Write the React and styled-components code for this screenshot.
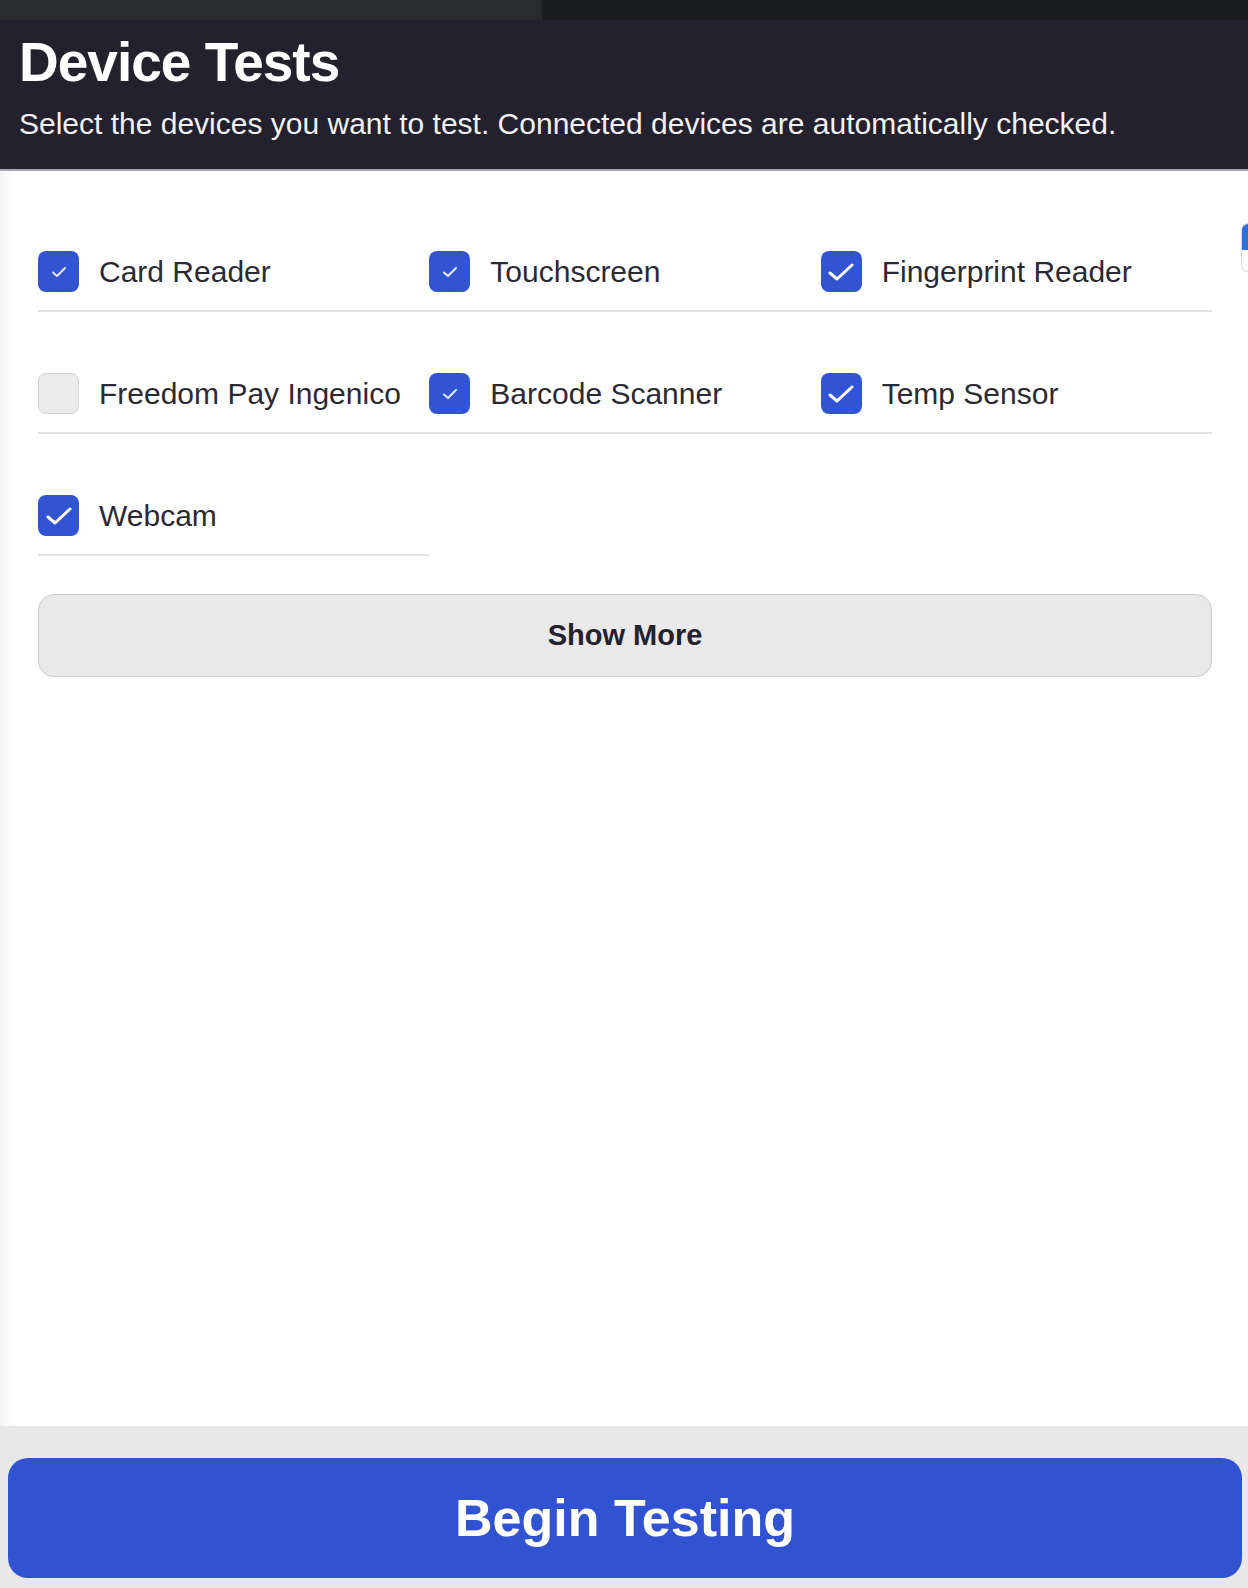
import React, { useState } from 'react';
import styled, { createGlobalStyle } from 'styled-components';

const GlobalStyle = createGlobalStyle`
  html, body {
    margin: 0;
    padding: 0;
    background: #ffffff;
  }
  * {
    box-sizing: border-box;
  }
`;

const devices = [
  { name: 'Card Reader', checked: true, big: false },
  { name: 'Touchscreen', checked: true, big: false },
  { name: 'Fingerprint Reader', checked: true, big: true },
  { name: 'Freedom Pay Ingenico', checked: false, big: false },
  { name: 'Barcode Scanner', checked: true, big: false },
  { name: 'Temp Sensor', checked: true, big: true },
  { name: 'Webcam', checked: true, big: true },
];

const Page = styled.div`
  position: relative;
  display: flex;
  flex-direction: column;
  min-height: 100vh;
  font-family: 'Liberation Sans', Arial, sans-serif;
  overflow: hidden;
`;

const TabStrip = styled.div`
  display: flex;
  height: 20px;
  background: #1b1c20;
`;

const ActiveTab = styled.div`
  width: 542px;
  background: #2a2b2f;
`;

const Header = styled.header`
  background: #22212d;
  padding: 12px 19px 27px;
  border-bottom: 2px solid #a7a7ab;
`;

const Title = styled.h1`
  margin: 0 0 14px;
  font-size: 55px;
  line-height: 60px;
  font-weight: 700;
  letter-spacing: -1px;
  color: #ffffff;
`;

const Subtitle = styled.p`
  margin: 0;
  font-size: 30px;
  line-height: 36px;
  color: #f1f1f3;
`;

const Content = styled.main`
  flex: 1;
  padding: 60px 36px 40px 38px;
  background: linear-gradient(to right, #f3f3f3 0, #fbfbfb 8px, #ffffff 16px);
`;

const Grid = styled.div`
  display: grid;
  grid-template-columns: repeat(3, 1fr);
  row-gap: 41px;
`;

const Item = styled.label`
  display: flex;
  align-items: center;
  gap: 20px;
  padding: 20px 0 18px;
  border-bottom: 2px solid #e1e1e3;
  cursor: pointer;
`;

const Box = styled.span`
  flex: none;
  display: flex;
  align-items: center;
  justify-content: center;
  width: 41px;
  height: 41px;
  border-radius: 8px;
  background: ${p => (p.$checked ? '#3254d1' : '#ebebeb')};
  border: ${p => (p.$checked ? 'none' : '1.5px solid #d3d3d5')};
`;

const Label = styled.span`
  font-size: 30px;
  line-height: 36px;
  color: #2b2a33;
  white-space: nowrap;
`;

const ShowMore = styled.button`
  display: block;
  width: 100%;
  height: 83px;
  margin-top: 38px;
  border: 1.5px solid #cdcdcf;
  border-radius: 16px;
  background: #e9e9ea;
  font-family: 'Liberation Sans', Arial, sans-serif;
  font-size: 29px;
  font-weight: 700;
  color: #23222e;
  cursor: pointer;
`;

const Footer = styled.footer`
  background: #e8e8e9;
  padding: 32px 6px 10px 8px;
`;

const BeginButton = styled.button`
  display: block;
  width: 100%;
  height: 120px;
  border: none;
  border-radius: 20px;
  background: #3253d1;
  font-family: 'Liberation Sans', Arial, sans-serif;
  font-size: 52px;
  font-weight: 700;
  color: #ffffff;
  cursor: pointer;
`;

const SideWidget = styled.div`
  position: absolute;
  top: 223px;
  right: 0;
  width: 7px;
  height: 49px;
  border: 1px solid #dcdcdf;
  border-right: none;
  border-radius: 8px 0 0 8px;
  background: #ffffff;
  overflow: hidden;

  &::before {
    content: '';
    display: block;
    height: 26px;
    background: #2f6fe0;
  }
`;

function Check({ big }) {
  if (big) {
    return (
      <svg width="26" height="18" viewBox="0 0 26 18" fill="none">
        <path
          d="M2 10l7 6L24 2"
          stroke="#ffffff"
          strokeWidth="3"
          strokeLinecap="round"
          strokeLinejoin="round"
        />
      </svg>
    );
  }
  return (
    <svg width="16" height="12" viewBox="0 0 16 12" fill="none">
      <path
        d="M2 6.5l4 3.5L14 2"
        stroke="rgba(255,255,255,0.88)"
        strokeWidth="2"
        strokeLinecap="round"
        strokeLinejoin="round"
      />
    </svg>
  );
}

export default function App() {
  const [list, setList] = useState(devices);

  const toggle = name =>
    setList(prev =>
      prev.map(d => (d.name === name ? { ...d, checked: !d.checked } : d))
    );

  return (
    <Page>
      <GlobalStyle />
      <TabStrip>
        <ActiveTab />
      </TabStrip>
      <Header>
        <Title>Device Tests</Title>
        <Subtitle>
          Select the devices you want to test. Connected devices are automatically checked.
        </Subtitle>
      </Header>
      <Content>
        <Grid>
          {list.map(d => (
            <Item key={d.name} onClick={() => toggle(d.name)}>
              <Box $checked={d.checked}>{d.checked && <Check big={d.big} />}</Box>
              <Label>{d.name}</Label>
            </Item>
          ))}
        </Grid>
        <ShowMore>Show More</ShowMore>
      </Content>
      <Footer>
        <BeginButton>Begin Testing</BeginButton>
      </Footer>
      <SideWidget />
    </Page>
  );
}
